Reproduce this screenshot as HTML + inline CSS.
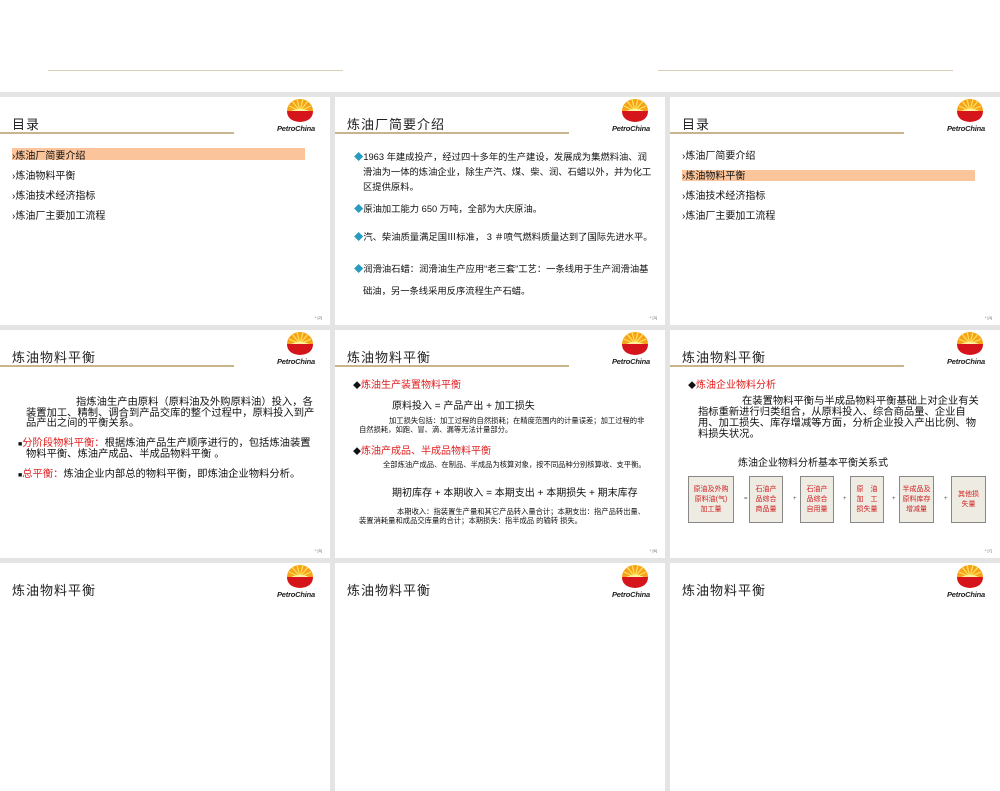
<!DOCTYPE html>
<html><head><meta charset="utf-8"><style>
*{margin:0;padding:0;box-sizing:border-box}
body{width:1000px;height:600px;overflow:hidden;background:#e4e4e4;position:relative;font-family:"Liberation Sans","Noto Sans CJK SC",sans-serif;color:#111}
.s{position:absolute;width:330px;height:228px;background:#fff;overflow:hidden}
.t{position:absolute;left:12px;top:17px;font-size:13px;letter-spacing:1px;color:#222}
.ln{position:absolute;left:0;top:35px;width:234px;height:2px;background:#c9b48e}
.lg{position:absolute;left:276px;top:0;width:50px;height:36px}
.lg .pc{position:absolute;left:1px;top:27px;font-size:7.5px;font-weight:bold;font-style:italic;color:#222;letter-spacing:-0.2px}
.pn{position:absolute;right:8px;top:218px;font-size:4px;color:#666}
.a{position:absolute;font-size:10px;white-space:nowrap}
.r{color:#e02020}
.box{position:absolute;top:146px;height:47px;background:#eeebe3;border:1.5px solid #888;color:#d02020;font-size:7px;line-height:10px;text-align:center;display:flex;align-items:center;justify-content:center}
.op{position:absolute;top:166px;font-size:6px;color:#555}
</style></head><body>
<svg width="0" height="0" style="position:absolute"><defs>
<g id="em">
<path d="M0 12 A13 12 0 0 1 26 12 Z" fill="#f7a21b"/>
<path d="M13 12 L5 2 M13 12 L10 0 M13 12 L16 0 M13 12 L21 2 M13 12 L2 7 M13 12 L24 7" stroke="#fde35a" stroke-width="1.2"/>
<path d="M0 12 L26 12 Q26 22 13 23 Q0 22 0 12 Z" fill="#d6141c"/>
<path d="M4 12 Q13 8 22 12 Z" fill="#fff3a0"/>
</g></defs></svg>

<div style="position:absolute;left:0;top:0;width:1000px;height:92px;background:#fff"></div>
<div style="position:absolute;left:48px;top:70px;width:295px;height:1px;background:#d9cfb8"></div>
<div style="position:absolute;left:658px;top:70px;width:295px;height:1px;background:#d9cfb8"></div>

<!-- Row1 col1 -->
<div class="s" style="left:0;top:97px">
<div class="t">目录</div><div class="ln"></div>
<div class="lg"><svg width="50" height="26"><use href="#em" x="11" y="2"/></svg><div class="pc">PetroChina</div></div>
<div style="position:absolute;left:12px;top:51px;width:293px;height:12px;background:#fbc49a"></div>
<div class="a" style="left:12px;top:50px">›炼油厂简要介绍</div>
<div class="a" style="left:12px;top:70px">›炼油物料平衡</div>
<div class="a" style="left:12px;top:90px">›炼油技术经济指标</div>
<div class="a" style="left:12px;top:110px">›炼油厂主要加工流程</div>
<div class="pn">* [2]</div></div>

<!-- Row1 col2 -->
<div class="s" style="left:335px;top:97px">
<div class="t">炼油厂简要介绍</div><div class="ln"></div>
<div class="lg"><svg width="50" height="26"><use href="#em" x="11" y="2"/></svg><div class="pc">PetroChina</div></div>
<div style="position:absolute;left:14px;top:53px;width:306px;font-size:9.3px;line-height:15px">
<div style="text-indent:-9px;padding-left:14px"><span style="color:#2a9bc0">◆</span>1963 年建成投产，经过四十多年的生产建设，发展成为集燃料油、润滑油为一体的炼油企业，除生产汽、煤、柴、润、石蜡以外，并为化工区提供原料。</div>
<div style="margin-top:7px;text-indent:-9px;padding-left:14px"><span style="color:#2a9bc0">◆</span>原油加工能力 650 万吨，全部为大庆原油。</div>
<div style="margin-top:13px;text-indent:-9px;padding-left:14px"><span style="color:#2a9bc0">◆</span>汽、柴油质量满足国Ⅲ标准， 3 ＃喷气燃料质量达到了国际先进水平。</div>
<div style="margin-top:13px;text-indent:-9px;padding-left:14px;line-height:22px"><span style="color:#2a9bc0">◆</span>润滑油石蜡：润滑油生产应用“老三套”工艺：一条线用于生产润滑油基础油，另一条线采用反序流程生产石蜡。</div>
</div>
<div class="pn">* [3]</div></div>

<!-- Row1 col3 -->
<div class="s" style="left:670px;top:97px">
<div class="t">目录</div><div class="ln"></div>
<div class="lg"><svg width="50" height="26"><use href="#em" x="11" y="2"/></svg><div class="pc">PetroChina</div></div>
<div style="position:absolute;left:12px;top:73px;width:293px;height:11px;background:#fbc49a"></div>
<div class="a" style="left:12px;top:50px">›炼油厂简要介绍</div>
<div class="a" style="left:12px;top:70px">›炼油物料平衡</div>
<div class="a" style="left:12px;top:90px">›炼油技术经济指标</div>
<div class="a" style="left:12px;top:110px">›炼油厂主要加工流程</div>
<div class="pn">* [4]</div></div>

<!-- Row2 col1 -->
<div class="s" style="left:0;top:330px">
<div class="t">炼油物料平衡</div><div class="ln"></div>
<div class="lg"><svg width="50" height="26"><use href="#em" x="11" y="2"/></svg><div class="pc">PetroChina</div></div>
<div style="position:absolute;left:26px;top:68px;width:290px;font-size:10.3px;line-height:10.5px">
<div style="text-indent:50px">指炼油生产由原料（原料油及外购原料油）投入，各装置加工、精制、调合到产品交库的整个过程中，原料投入到产品产出之间的平衡关系。</div>
<div style="margin-top:9px;text-indent:-8px"><span style="font-size:7px">■</span><span class="r">分阶段物料平衡：</span>根据炼油产品生产顺序进行的，包括炼油装置物料平衡、炼油产成品、半成品物料平衡 。</div>
<div style="margin-top:9px;text-indent:-8px"><span style="font-size:7px">■</span><span class="r">总平衡：</span>炼油企业内部总的物料平衡，即炼油企业物料分析。</div>
</div>
<div class="pn">* [5]</div></div>

<!-- Row2 col2 -->
<div class="s" style="left:335px;top:330px">
<div class="t">炼油物料平衡</div><div class="ln"></div>
<div class="lg"><svg width="50" height="26"><use href="#em" x="11" y="2"/></svg><div class="pc">PetroChina</div></div>
<div class="a" style="left:18px;top:46px"><span style="font-size:8px">◆</span><span class="r">炼油生产装置物料平衡</span></div>
<div class="a" style="left:57px;top:67px;font-size:10px">原料投入 = 产品产出 + 加工损失</div>
<div style="position:absolute;left:24px;top:86px;width:290px;font-size:7.3px;line-height:9px"><div style="text-indent:30px">加工损失包括：加工过程的自然损耗；在精度范围内的计量误差；加工过程的非自然损耗，如跑、冒、滴、漏等无法计量部分。</div></div>
<div class="a" style="left:18px;top:112px"><span style="font-size:8px">◆</span><span class="r">炼油产成品、半成品物料平衡</span></div>
<div style="position:absolute;left:24px;top:130px;width:290px;font-size:7.3px;line-height:10px"><div style="text-indent:24px">全部炼油产成品、在制品、半成品为核算对象，按不同品种分别核算收、支平衡。</div></div>
<div class="a" style="left:57px;top:154px;font-size:10px">期初库存 + 本期收入 = 本期支出 + 本期损失 + 期末库存</div>
<div style="position:absolute;left:24px;top:177px;width:290px;font-size:7.3px;line-height:9px"><div style="text-indent:38px">本期收入：指装置生产量和其它产品转入量合计；本期支出：指产品转出量、装置消耗量和成品交库量的合计；本期损失：指半成品 的输转 损失。</div></div>
<div class="pn">* [6]</div></div>

<!-- Row2 col3 -->
<div class="s" style="left:670px;top:330px">
<div class="t">炼油物料平衡</div><div class="ln"></div>
<div class="lg"><svg width="50" height="26"><use href="#em" x="11" y="2"/></svg><div class="pc">PetroChina</div></div>
<div class="a" style="left:18px;top:46px"><span style="font-size:8px">◆</span><span class="r">炼油企业物料分析</span></div>
<div style="position:absolute;left:28px;top:66px;width:288px;font-size:10.3px;line-height:11px"><div style="text-indent:44px">在装置物料平衡与半成品物料平衡基础上对企业有关指标重新进行归类组合，从原料投入、综合商品量、企业自用、加工损失、库存增减等方面，分析企业投入产出比例、物料损失状况。</div></div>
<div class="a" style="left:68px;top:124px;font-size:10px">炼油企业物料分析基本平衡关系式</div>
<div class="box" style="left:18px;width:46px">原油及外购<br>原料油(气)<br>加工量</div>
<div class="op" style="left:74px">=</div>
<div class="box" style="left:79px;width:34px">石油产<br>品综合<br>商品量</div>
<div class="op" style="left:123px">+</div>
<div class="box" style="left:130px;width:34px">石油产<br>品综合<br>自用量</div>
<div class="op" style="left:173px">+</div>
<div class="box" style="left:180px;width:34px">原　油<br>加　工<br>损失量</div>
<div class="op" style="left:222px">+</div>
<div class="box" style="left:229px;width:35px">半成品及<br>原料库存<br>增减量</div>
<div class="op" style="left:274px">+</div>
<div class="box" style="left:281px;width:35px">其他损<br>失量</div>
<div class="pn">* [7]</div></div>

<!-- Row3 -->
<div class="s" style="left:0;top:563px">
<div class="t">炼油物料平衡</div>
<div class="lg"><svg width="50" height="26"><use href="#em" x="11" y="2"/></svg><div class="pc">PetroChina</div></div></div>
<div class="s" style="left:335px;top:563px">
<div class="t">炼油物料平衡</div>
<div class="lg"><svg width="50" height="26"><use href="#em" x="11" y="2"/></svg><div class="pc">PetroChina</div></div></div>
<div class="s" style="left:670px;top:563px">
<div class="t">炼油物料平衡</div>
<div class="lg"><svg width="50" height="26"><use href="#em" x="11" y="2"/></svg><div class="pc">PetroChina</div></div></div>
</body></html>
